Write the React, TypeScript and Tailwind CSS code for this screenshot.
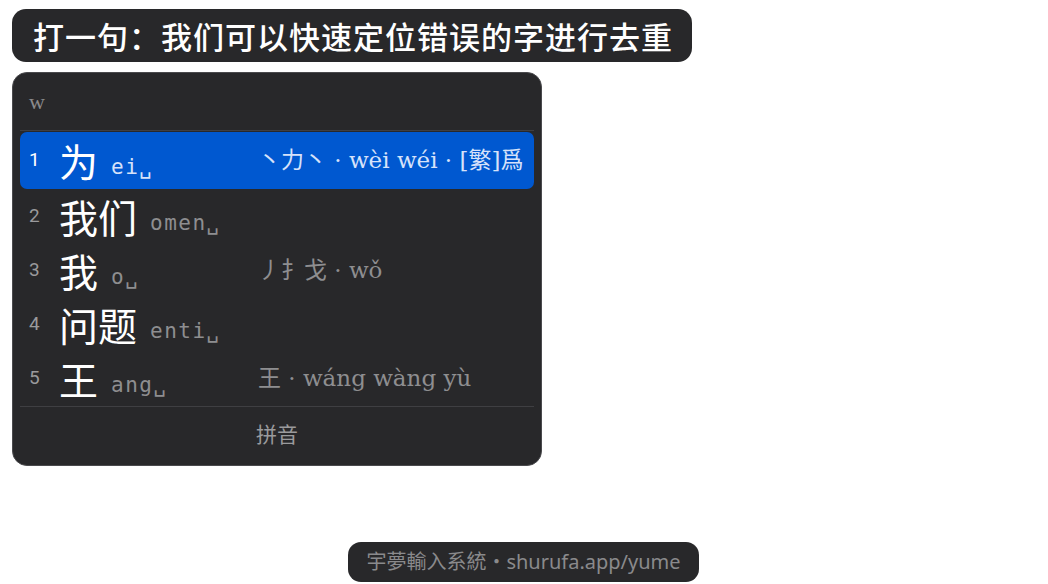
import React from "react";

const cjk = '"Noto Sans CJK SC", "Noto Sans", sans-serif';
const mono = '"DejaVu Sans Mono", "Liberation Mono", monospace';
const serif = '"DejaVu Serif", "Noto Sans CJK SC", serif';

type Row = { n: string; cand: string; code: string; comment?: string };
const rows: Row[] = [
  { n: "1", cand: "为", code: "ei", comment: "丶力丶 · wèi wéi · [繁]爲" },
  { n: "2", cand: "我们", code: "omen" },
  { n: "3", cand: "我", code: "o", comment: "丿扌戈 · wǒ" },
  { n: "4", cand: "问题", code: "enti" },
  { n: "5", cand: "王", code: "ang", comment: "王 · wáng wàng yù" },
];

export default function App() {
  return (
    <div className="w-[1048px] h-[584px] bg-white flex flex-col overflow-hidden">
      <div
        className="ml-[12px] mt-[9px] w-[680px] h-[53px] rounded-[14px] bg-[#28282a] text-white flex items-center pl-[21px] text-[31px] font-medium leading-none tracking-[1px]"
        style={{ fontFamily: cjk }}
      >
        打一句：我们可以快速定位错误的字进行去重
      </div>

      <div className="ml-[12px] mt-[10px] w-[530px] h-[394px] rounded-[15px] border border-[#4a4a4d] bg-[#28282a] px-[7px] flex flex-col">
        <div
          className="h-[57px] flex items-center pl-[9px] text-[22px] text-[#8a8a8c]"
          style={{ fontFamily: '"Liberation Serif", serif' }}
        >
          w
        </div>
        <div className="h-px bg-[#3f3f42]" />
        <div className="flex flex-col pt-[1px]">
          {rows.map((r, i) => {
            const hl = i === 0;
            return (
              <div
                key={r.n}
                className={
                  "flex items-center pl-[9px] " +
                  (hl ? "h-[57px] rounded-[7px] bg-[#0058d0]" : "h-[54px]")
                }
              >
                <div className="w-[229px] flex items-center shrink-0">
                  <span
                    className={
                      "w-[30px] text-[19px] " + (hl ? "text-white" : "text-[#9a9a9c]")
                    }
                    style={{ fontFamily: '"Roboto", "Noto Sans", sans-serif' }}
                  >
                    {r.n}
                  </span>
                  <span
                    className="text-[39px] leading-none text-white"
                    style={{ fontFamily: cjk }}
                  >
                    {r.cand}
                  </span>
                  <span
                    className={
                      "ml-[13px] mt-[14px] text-[21px] leading-none tracking-[1.5px] " +
                      (hl ? "text-[#d6e2fa]" : "text-[#8e8e90]")
                    }
                    style={{ fontFamily: mono }}
                  >
                    {r.code}
                    <span>␣</span>
                  </span>
                </div>
                {r.comment && (
                  <span
                    className={
                      "text-[23px] leading-none whitespace-nowrap " +
                      (hl ? "text-[#d6e2fa]" : "text-[#8e8e90]")
                    }
                    style={{ fontFamily: serif }}
                  >
                    {r.comment}
                  </span>
                )}
              </div>
            );
          })}
        </div>
        <div className="h-px bg-[#3f3f42] mt-[1px]" />
        <div
          className="flex-1 flex items-center justify-center pb-[4px] text-[21px] text-[#9a9a9c]"
          style={{ fontFamily: cjk }}
        >
          拼音
        </div>
      </div>

      <div className="flex-1" />
      <div
        className="ml-[348px] mb-[2px] w-[351px] h-[40px] rounded-[13px] bg-[#28282a] flex items-center justify-center text-[20px] text-[#8a8a8c]"
        style={{ fontFamily: '"Noto Sans", "Noto Sans CJK SC", sans-serif' }}
      >
        宇夢輸入系統・shurufa.app/yume
      </div>
    </div>
  );
}
